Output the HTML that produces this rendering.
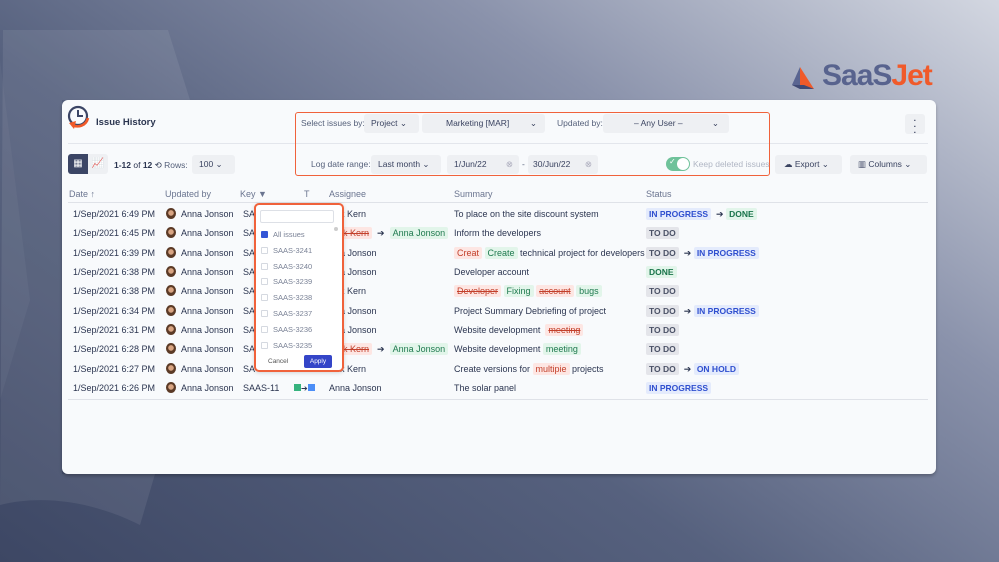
<!DOCTYPE html>
<html><head><meta charset="utf-8"><style>
*{box-sizing:border-box;margin:0;padding:0}
body{width:999px;height:562px;overflow:hidden;position:relative;font-family:"Liberation Sans",sans-serif;background:linear-gradient(35deg,#3d4764 0%,#56617e 40%,#8a92ab 70%,#d3d7e1 100%);color:#2b3550}
.abs{position:absolute}
.card{position:absolute;left:62px;top:100px;width:874px;height:374px;background:#f8fafc;border-radius:6px;box-shadow:0 2px 3px rgba(0,0,0,.25)}
.t{position:absolute;font-size:9px;white-space:nowrap;line-height:12px}
.btn{position:absolute;background:#eef0f3;border-radius:3px;font-size:8.5px;color:#3a4360;line-height:19px;height:19px;white-space:nowrap}
.lbl{position:absolute;font-size:8.5px;color:#55607a;white-space:nowrap}
.hd{position:absolute;top:189px;font-size:9px;color:#6b7590}
.tag{padding:1px 3px;border-radius:2px;font-weight:bold;font-size:8.5px}
.ip{background:#e4ebfc;color:#2f4fcf}
.td{background:#e4e5ea;color:#4a5166}
.dn{background:#e2f5ea;color:#19744a}
.rd{background:#fde6e3;color:#c3402b;text-decoration:line-through;padding:1px 3px;border-radius:2px}
.gr{background:#e2f5ea;color:#1f7a4f;padding:1px 3px;border-radius:2px}
.av{position:absolute;width:10px;height:11px;border-radius:50%;background:radial-gradient(circle at 50% 45%,#d9a583 30%,#5b3a26 40%)}
.cb{display:inline-block;width:7px;height:7px;border:1px solid #d5d9e0;border-radius:1px;vertical-align:-1px;margin-right:5px;background:#fff}
</style></head><body>
<svg class="abs" style="left:0;top:0" width="999" height="562"><path d="M3 30 L168 30 L190 100 L62 100 L62 474 L155 474 L140 525 C90 500 40 495 0 505 Z" fill="rgba(255,255,255,.08)"/><path d="M0 60 L30 300 L0 400 Z" fill="rgba(255,255,255,.04)"/></svg>
<svg class="abs" style="left:788px;top:65px" width="30" height="26"><path d="M12 2 L4 20 L12 24 Z" fill="#5a6591"/><path d="M12 2 L26 24 L12 24 Z" fill="#f05a2a"/><path d="M4 20 L12 24 L26 24 L16 20 Z" fill="#404a75"/></svg>
<div class="abs" style="left:822px;top:59px;font-size:30px;font-weight:bold;letter-spacing:-1px;color:#58638e">SaaS<span style="color:#f05a2a">Jet</span></div>
<div class="card"></div>
<svg class="abs" style="left:66px;top:104px" width="26" height="28"><circle cx="12" cy="12" r="9" fill="none" stroke="#3b4565" stroke-width="2.2"/><path d="M12 6 V12 H17" fill="none" stroke="#3b4565" stroke-width="2"/><path d="M22 14 C20 22 12 24 6 21" fill="none" stroke="#f05a2a" stroke-width="2.6"/><path d="M3 19 L10 17 L8 25 Z" fill="#f05a2a"/></svg>
<div class="t" style="left:96px;top:117px;font-weight:bold;font-size:9.5px">Issue History</div>
<div class="abs" style="left:68px;top:143px;width:860px;height:1px;background:#e3e6ec"></div>
<div class="abs" style="left:295px;top:112px;width:475px;height:64px;border:1.5px solid #f0623b;border-radius:3px"></div>
<div class="lbl" style="left:301px;top:118px">Select issues by:</div>
<div class="btn" style="left:364px;top:114px;width:55px;padding-left:7px">Project ⌄</div>
<div class="btn" style="left:422px;top:114px;width:123px;padding-left:24px">Marketing [MAR] <span style="position:absolute;right:8px">⌄</span></div>
<div class="lbl" style="left:557px;top:118px">Updated by:</div>
<div class="btn" style="left:603px;top:114px;width:126px;padding-left:31px">– Any User – <span style="position:absolute;right:10px">⌄</span></div>
<div class="btn" style="left:905px;top:114px;width:20px;height:20px;text-align:center;font-weight:bold;line-height:6px;padding-top:3px">·<br>·<br>·</div>
<div class="abs" style="left:68px;top:154px;width:20px;height:20px;background:#3b4565;border-radius:3px 0 0 3px;color:#fff;font-size:10px;text-align:center;line-height:20px">▦</div>
<div class="abs" style="left:88px;top:154px;width:20px;height:20px;background:#eef0f3;border-radius:0 3px 3px 0;font-size:10px;text-align:center;line-height:20px">📈</div>
<div class="t" style="left:114px;top:159px;font-size:8.5px"><b>1-12</b> of <b>12</b> ⟲ <span style="color:#55607a">Rows:</span></div>
<div class="btn" style="left:192px;top:155px;width:43px;padding-left:7px">100 ⌄</div>
<div class="lbl" style="left:311px;top:159px">Log date range:</div>
<div class="btn" style="left:371px;top:155px;width:70px;padding-left:7px">Last month ⌄</div>
<div class="btn" style="left:447px;top:155px;width:72px;padding-left:7px">1/Jun/22 <span style="position:absolute;right:6px;color:#aab">⊗</span></div>
<div class="lbl" style="left:522px;top:159px">-</div>
<div class="btn" style="left:528px;top:155px;width:70px;padding-left:5px">30/Jun/22 <span style="position:absolute;right:6px;color:#aab">⊗</span></div>
<div class="abs" style="left:666px;top:157px;width:24px;height:14px;border-radius:7px;background:#6fc29a"><div style="position:absolute;right:1px;top:1px;width:12px;height:12px;border-radius:50%;background:#fff"></div><span style="position:absolute;left:3px;top:0;font-size:8px;color:#fff">✓</span></div>
<div class="lbl" style="left:693px;top:159px;color:#b0b6c4">Keep deleted issues</div>
<div class="btn" style="left:775px;top:155px;width:67px;padding-left:9px">☁ Export ⌄</div>
<div class="btn" style="left:850px;top:155px;width:77px;padding-left:8px">▥ Columns ⌄</div>
<div class="hd" style="left:69px">Date ↑</div>
<div class="hd" style="left:165px">Updated by</div>
<div class="hd" style="left:240px">Key ▼</div>
<div class="hd" style="left:304px">T</div>
<div class="hd" style="left:329px">Assignee</div>
<div class="hd" style="left:454px">Summary</div>
<div class="hd" style="left:646px">Status</div>
<div class="abs" style="left:68px;top:202px;width:860px;height:1px;background:#dfe2e8"></div>
<div class="abs" style="left:68px;top:399px;width:860px;height:1px;background:#dfe2e8"></div>
<div class="t" style="left:73px;top:208px">1/Sep/2021 6:49 PM</div><div class="av" style="left:166px;top:208px"></div><div class="t" style="left:181px;top:208px">Anna Jonson</div><div class="t" style="left:243px;top:208px">SA</div><div class="t" style="left:340px;top:208px">k Kern</div><div class="t" style="left:454px;top:208px">To place on the site discount system</div><div class="t" style="left:646px;top:208px"><span class="tag ip">IN PROGRESS</span> &nbsp;➔ <span class="tag dn">DONE</span></div>
<div class="t" style="left:73px;top:227px">1/Sep/2021 6:45 PM</div><div class="av" style="left:166px;top:227px"></div><div class="t" style="left:181px;top:227px">Anna Jonson</div><div class="t" style="left:243px;top:227px">SA</div><div class="t" style="left:340px;top:227px"><span class="rd">k Kern</span> &nbsp;➔ &nbsp;<span class="gr">Anna Jonson</span></div><div class="t" style="left:454px;top:227px">Inform the developers</div><div class="t" style="left:646px;top:227px"><span class="tag td">TO DO</span></div>
<div class="t" style="left:73px;top:247px">1/Sep/2021 6:39 PM</div><div class="av" style="left:166px;top:247px"></div><div class="t" style="left:181px;top:247px">Anna Jonson</div><div class="t" style="left:243px;top:247px">SA</div><div class="t" style="left:340px;top:247px">a Jonson</div><div class="t" style="left:454px;top:247px"><span class="rd" style="text-decoration:none">Creat</span> <span class="gr">Create</span> technical project for developers</div><div class="t" style="left:646px;top:247px"><span class="tag td">TO DO</span> &nbsp;➔ <span class="tag ip">IN PROGRESS</span></div>
<div class="t" style="left:73px;top:266px">1/Sep/2021 6:38 PM</div><div class="av" style="left:166px;top:266px"></div><div class="t" style="left:181px;top:266px">Anna Jonson</div><div class="t" style="left:243px;top:266px">SA</div><div class="t" style="left:340px;top:266px">a Jonson</div><div class="t" style="left:454px;top:266px">Developer account</div><div class="t" style="left:646px;top:266px"><span class="tag dn">DONE</span></div>
<div class="t" style="left:73px;top:285px">1/Sep/2021 6:38 PM</div><div class="av" style="left:166px;top:285px"></div><div class="t" style="left:181px;top:285px">Anna Jonson</div><div class="t" style="left:243px;top:285px">SA</div><div class="t" style="left:340px;top:285px">k Kern</div><div class="t" style="left:454px;top:285px"><span class="rd">Developer</span> <span class="gr">Fixing</span> <span class="rd">account</span> <span class="gr">bugs</span></div><div class="t" style="left:646px;top:285px"><span class="tag td">TO DO</span></div>
<div class="t" style="left:73px;top:305px">1/Sep/2021 6:34 PM</div><div class="av" style="left:166px;top:305px"></div><div class="t" style="left:181px;top:305px">Anna Jonson</div><div class="t" style="left:243px;top:305px">SA</div><div class="t" style="left:340px;top:305px">a Jonson</div><div class="t" style="left:454px;top:305px">Project Summary Debriefing of project</div><div class="t" style="left:646px;top:305px"><span class="tag td">TO DO</span> &nbsp;➔ <span class="tag ip">IN PROGRESS</span></div>
<div class="t" style="left:73px;top:324px">1/Sep/2021 6:31 PM</div><div class="av" style="left:166px;top:324px"></div><div class="t" style="left:181px;top:324px">Anna Jonson</div><div class="t" style="left:243px;top:324px">SA</div><div class="t" style="left:340px;top:324px">a Jonson</div><div class="t" style="left:454px;top:324px">Website development &nbsp;<span class="rd">meeting</span></div><div class="t" style="left:646px;top:324px"><span class="tag td">TO DO</span></div>
<div class="t" style="left:73px;top:343px">1/Sep/2021 6:28 PM</div><div class="av" style="left:166px;top:343px"></div><div class="t" style="left:181px;top:343px">Anna Jonson</div><div class="t" style="left:243px;top:343px">SA</div><div class="t" style="left:340px;top:343px"><span class="rd">k Kern</span> &nbsp;➔ &nbsp;<span class="gr">Anna Jonson</span></div><div class="t" style="left:454px;top:343px">Website development <span class="gr">meeting</span></div><div class="t" style="left:646px;top:343px"><span class="tag td">TO DO</span></div>
<div class="t" style="left:73px;top:363px">1/Sep/2021 6:27 PM</div><div class="av" style="left:166px;top:363px"></div><div class="t" style="left:181px;top:363px">Anna Jonson</div><div class="t" style="left:243px;top:363px">SA</div><div class="t" style="left:340px;top:363px">k Kern</div><div class="t" style="left:454px;top:363px">Create versions for <span class="rd" style="text-decoration:none">multipie</span> projects</div><div class="t" style="left:646px;top:363px"><span class="tag td">TO DO</span> &nbsp;➔ <span class="tag ip">ON HOLD</span></div>
<div class="t" style="left:73px;top:382px">1/Sep/2021 6:26 PM</div><div class="av" style="left:166px;top:382px"></div><div class="t" style="left:181px;top:382px">Anna Jonson</div><div class="t" style="left:243px;top:382px">SAAS-11</div><div class="t" style="left:294px;top:382px"><span style="display:inline-block;width:7px;height:7px;background:#36b37e"></span><span style="font-size:8px">➔</span><span style="display:inline-block;width:7px;height:7px;background:#4c8ef7"></span></div><div class="t" style="left:329px;top:382px">Anna Jonson</div><div class="t" style="left:454px;top:382px">The solar panel</div><div class="t" style="left:646px;top:382px"><span class="tag ip">IN PROGRESS</span></div>
<div class="abs" style="left:254px;top:203px;width:90px;height:169px;background:#fff;border:2px solid #f0623b;border-radius:5px;box-shadow:0 1px 4px rgba(0,0,0,.15)">
<div style="position:absolute;left:4px;top:5px;width:74px;height:13px;border:1px solid #dde0e6;border-radius:2px"></div>
<div style="position:absolute;left:78px;top:22px;width:4px;height:4px;border-radius:50%;background:#ccc"></div>
<div style="position:absolute;left:5px;top:22px;font-size:7.5px;color:#7a8296;line-height:15.8px;white-space:nowrap">
<div><span class="cb" style="background:#3456d6;border-color:#3456d6"></span>All issues</div>
<div><span class="cb"></span>SAAS-3241</div><div><span class="cb"></span>SAAS-3240</div><div><span class="cb"></span>SAAS-3239</div><div><span class="cb"></span>SAAS-3238</div><div><span class="cb"></span>SAAS-3237</div><div><span class="cb"></span>SAAS-3236</div><div><span class="cb"></span>SAAS-3235</div></div>
<div style="position:absolute;left:12px;top:153px;font-size:6.5px;color:#555">Cancel</div>
<div style="position:absolute;left:48px;top:150px;width:28px;height:13px;background:#3445c8;border-radius:2px;color:#fff;font-size:6.5px;text-align:center;line-height:13px">Apply</div>
</div>
</body></html>
